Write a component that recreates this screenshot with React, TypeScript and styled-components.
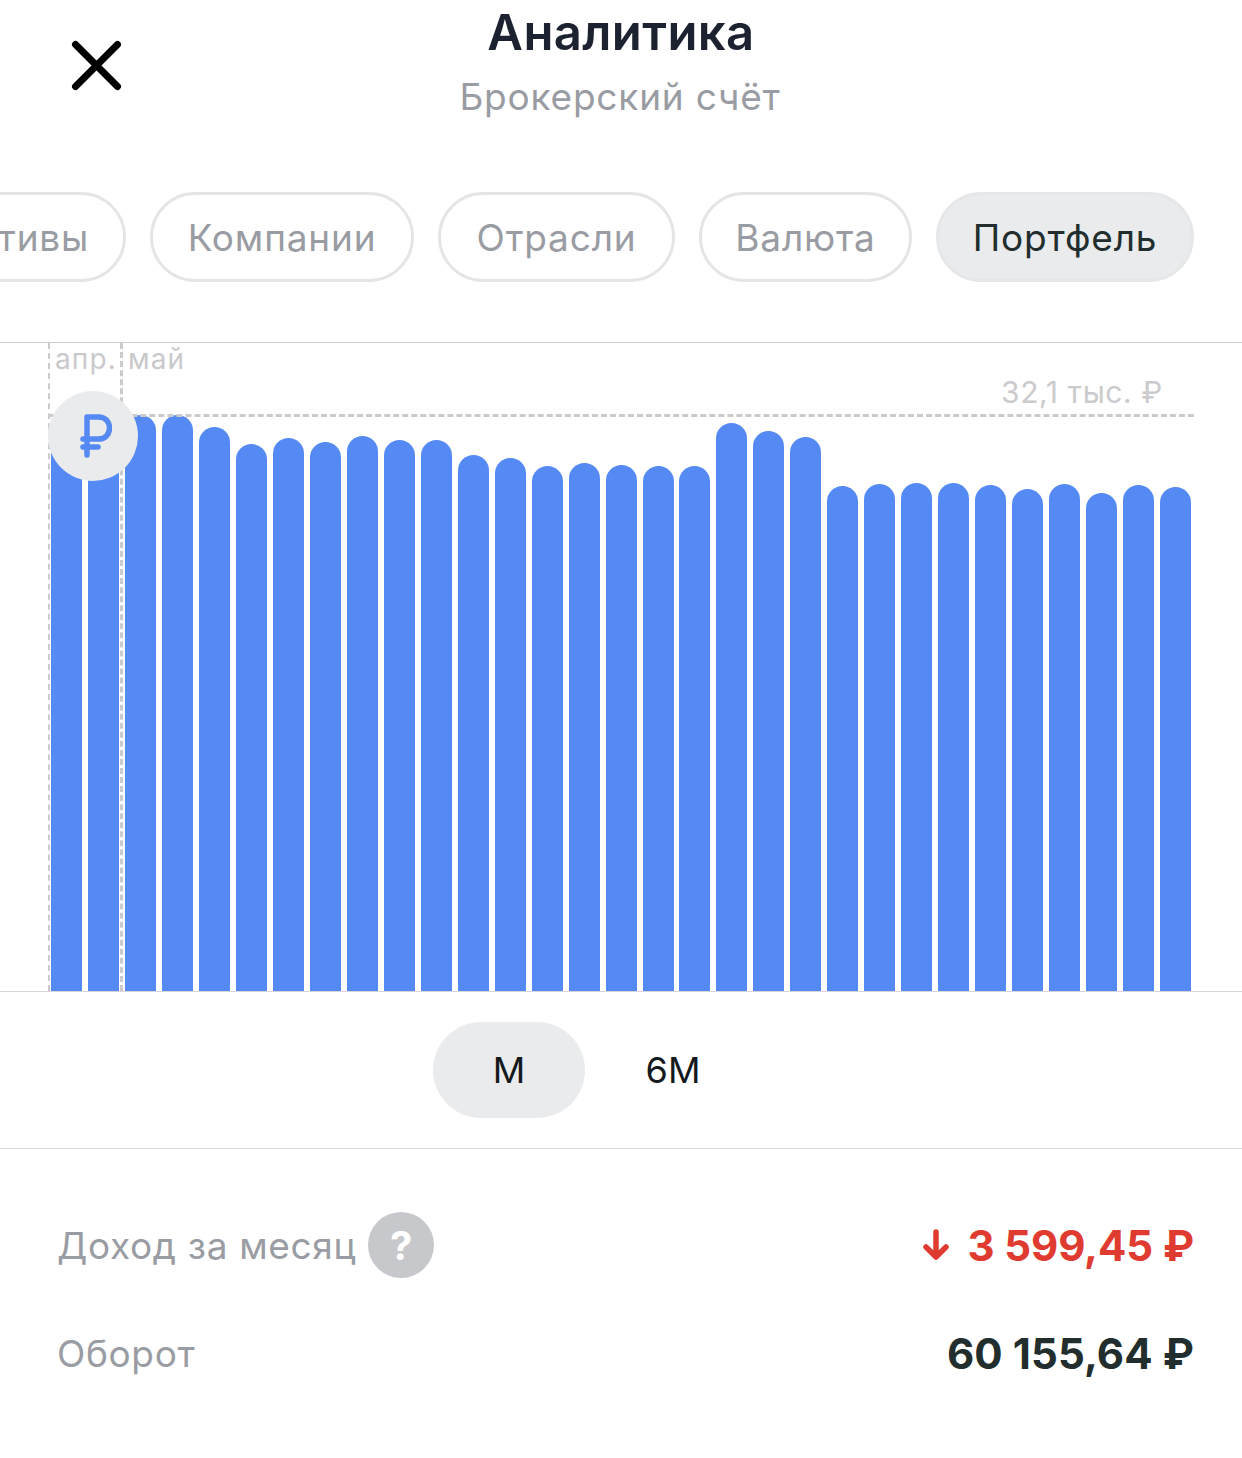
import styled, { createGlobalStyle } from 'styled-components'

const GlobalStyle = createGlobalStyle`
  html, body { margin: 0; padding: 0; background: #fff; }
  body { font-family: Inter, "Noto Sans", sans-serif; }
`

const Page = styled.div`
  width: 1242px;
  height: 1458px;
  overflow: hidden;
  display: flex;
  flex-direction: column;
`

const Header = styled.header`
  position: relative;
  height: 192px;
  display: flex;
  flex-direction: column;
  align-items: center;
  flex-shrink: 0;
`

const CloseButton = styled.div`
  position: absolute;
  left: 70px;
  top: 39px;
  width: 54px;
  height: 54px;
`

const Title = styled.h1`
  margin: 4px 0 0;
  font-size: 49px;
  line-height: 58px;
  font-weight: 600;
  letter-spacing: 0.4px;
  color: #1c2230;
`

const Subtitle = styled.div`
  margin: 5px 2px 0 0;
  font-size: 37px;
  line-height: 60px;
  color: #9a9ca3;
  letter-spacing: 0.8px;
`

const Chips = styled.div`
  height: 90px;
  display: flex;
  justify-content: flex-end;
  gap: 24px;
  padding-right: 48px;
  flex-shrink: 0;
`

const Chip = styled.div<{ $active?: boolean; $width: number }>`
  flex-shrink: 0;
  box-sizing: border-box;
  width: ${p => p.$width}px;
  height: 90px;
  border-radius: 45px;
  border: 3px solid ${p => (p.$active ? '#e5e7e9' : '#e4e5e7')};
  background: ${p => (p.$active ? '#e9ebec' : '#fff')};
  color: ${p => (p.$active ? '#222d2d' : '#9a9ca3')};
  font-size: 37px;
  letter-spacing: 0.8px;
  display: flex;
  align-items: center;
  justify-content: center;
`

const Chart = styled.section`
  position: relative;
  margin-top: 60px;
  height: 648px;
  box-sizing: content-box;
  border-top: 1px solid #cfcfd1;
  border-bottom: 1px solid #d6d6d8;
  flex-shrink: 0;
`

const Bars = styled.div`
  height: 100%;
  padding-left: 51px;
  display: flex;
  align-items: flex-end;
  gap: 5.98px;
`

const Bar = styled.div`
  width: 31px;
  flex-shrink: 0;
  background: #5589f3;
  border-radius: 15.5px 15.5px 0 0;
`

const MonthLine = styled.div<{ $x: number; $width: number }>`
  position: absolute;
  left: ${p => p.$x}px;
  top: 0;
  bottom: 0;
  border-left: ${p => p.$width}px dashed #cbcbcd;
`

const MonthLabel = styled.span<{ $x: number }>`
  position: absolute;
  left: ${p => p.$x}px;
  top: 0;
  font-size: 28px;
  line-height: 33px;
  letter-spacing: 1.1px;
  color: #c9c9cb;
`

const MaxLine = styled.div`
  position: absolute;
  left: 50px;
  right: 48px;
  top: 71px;
  border-top: 3px dashed #cbcbcd;
`

const MaxLabel = styled.span`
  position: absolute;
  right: 79px;
  top: 32px;
  font-size: 30px;
  line-height: 34px;
  letter-spacing: 0.6px;
  color: #cbcbcd;
`

const CurrencyBadge = styled.div`
  position: absolute;
  left: 48px;
  top: 48px;
  width: 90px;
  height: 90px;
  box-sizing: border-box;
  padding-left: 6px;
  border-radius: 50%;
  background: #e9ebec;
  display: flex;
  align-items: center;
  justify-content: center;
`

const Periods = styled.div`
  height: 157px;
  box-sizing: border-box;
  border-bottom: 1px solid #d6d6d8;
  padding: 30px 0 0 433px;
  display: flex;
  gap: 12px;
  flex-shrink: 0;
`

const Period = styled.div<{ $active?: boolean }>`
  width: 152px;
  height: 96px;
  border-radius: 48px;
  background: ${p => (p.$active ? '#e9ebec' : 'transparent')};
  color: #14191c;
  font-size: 36px;
  display: flex;
  align-items: center;
  justify-content: center;
`

const Stats = styled.div`
  padding: 63px 48px 0 57px;
  display: flex;
  flex-direction: column;
  gap: 42px;
`

const StatRow = styled.div`
  height: 66px;
  display: flex;
  align-items: center;
  justify-content: space-between;
`

const StatLabel = styled.div`
  display: flex;
  align-items: center;
  gap: 12px;
  font-size: 37px;
  letter-spacing: 0.65px;
  color: #9a9ca3;
`

const Help = styled.span`
  width: 66px;
  height: 66px;
  border-radius: 50%;
  background: #c6c8cb;
  color: #fff;
  font-size: 40px;
  font-weight: 700;
  letter-spacing: 0;
  display: flex;
  align-items: center;
  justify-content: center;
`

const StatValue = styled.div<{ $color: string; $spacing: number }>`
  display: flex;
  align-items: center;
  gap: 18px;
  font-size: 42px;
  font-weight: 700;
  letter-spacing: ${p => p.$spacing}px;
  color: ${p => p.$color};
`

const tops = [
  415, 415, 415, 415, 427, 444, 438, 442, 436, 440, 440, 455, 458, 466, 463, 465,
  466, 466, 423, 431, 437, 486, 484, 483, 483, 485, 489, 484, 493, 485, 487,
]

const chips = [
  { name: 'Активы', width: 212 },
  { name: 'Компании', width: 264 },
  { name: 'Отрасли', width: 237 },
  { name: 'Валюта', width: 213 },
  { name: 'Портфель', width: 258 },
]

function App() {
  return (
    <Page>
      <GlobalStyle />
      <Header>
        <CloseButton>
          <svg width="54" height="54" viewBox="0 0 54 54" fill="none">
            <path d="M5.500 5.500L47.500 47.500M47.500 5.500L5.500 47.500" stroke="#000" strokeWidth="7" strokeLinecap="round" />
          </svg>
        </CloseButton>
        <Title>Аналитика</Title>
        <Subtitle>Брокерский счёт</Subtitle>
      </Header>

      <Chips>
        {chips.map((c, i) => (
          <Chip key={c.name} $width={c.width} $active={i === chips.length - 1}>{c.name}</Chip>
        ))}
      </Chips>

      <Chart>
        <Bars>
          {tops.map((top, i) => (
            <Bar key={i} style={{ height: 991 - top }} />
          ))}
        </Bars>
        <MonthLine $x={48} $width={2} />
        <MonthLine $x={120} $width={3} />
        <MonthLabel $x={55}>апр.</MonthLabel>
        <MonthLabel $x={128}>май</MonthLabel>
        <MaxLine />
        <MaxLabel>32,1 тыс. ₽</MaxLabel>
        <CurrencyBadge>
          <svg width="32" height="44" viewBox="0 0 32 44" fill="none">
            <path
              d="M7 41V3H18.500C25 3 29.500 7.500 29.500 14C29.500 20.500 25 25 18.500 25H3M3 33H18"
              stroke="#5589f3"
              strokeWidth="5.500"
              strokeLinecap="round"
              strokeLinejoin="round"
            />
          </svg>
        </CurrencyBadge>
      </Chart>

      <Periods>
        <Period $active>М</Period>
        <Period>6М</Period>
      </Periods>

      <Stats>
        <StatRow>
          <StatLabel>
            Доход за месяц
            <Help>?</Help>
          </StatLabel>
          <StatValue $color="#e03b30" $spacing={-0.1}>
            <svg width="26" height="32" viewBox="0 0 26 32" fill="none">
              <path
                d="M13 3V28M3 18L13 28L23 18"
                stroke="#e03b30"
                strokeWidth="5.500"
                strokeLinecap="round"
                strokeLinejoin="round"
              />
            </svg>
            <span>3 599,45 ₽</span>
          </StatValue>
        </StatRow>
        <StatRow>
          <StatLabel>Оборот</StatLabel>
          <StatValue $color="#222d2d" $spacing={0.1}>60 155,64 ₽</StatValue>
        </StatRow>
      </Stats>
    </Page>
  )
}

export default App
